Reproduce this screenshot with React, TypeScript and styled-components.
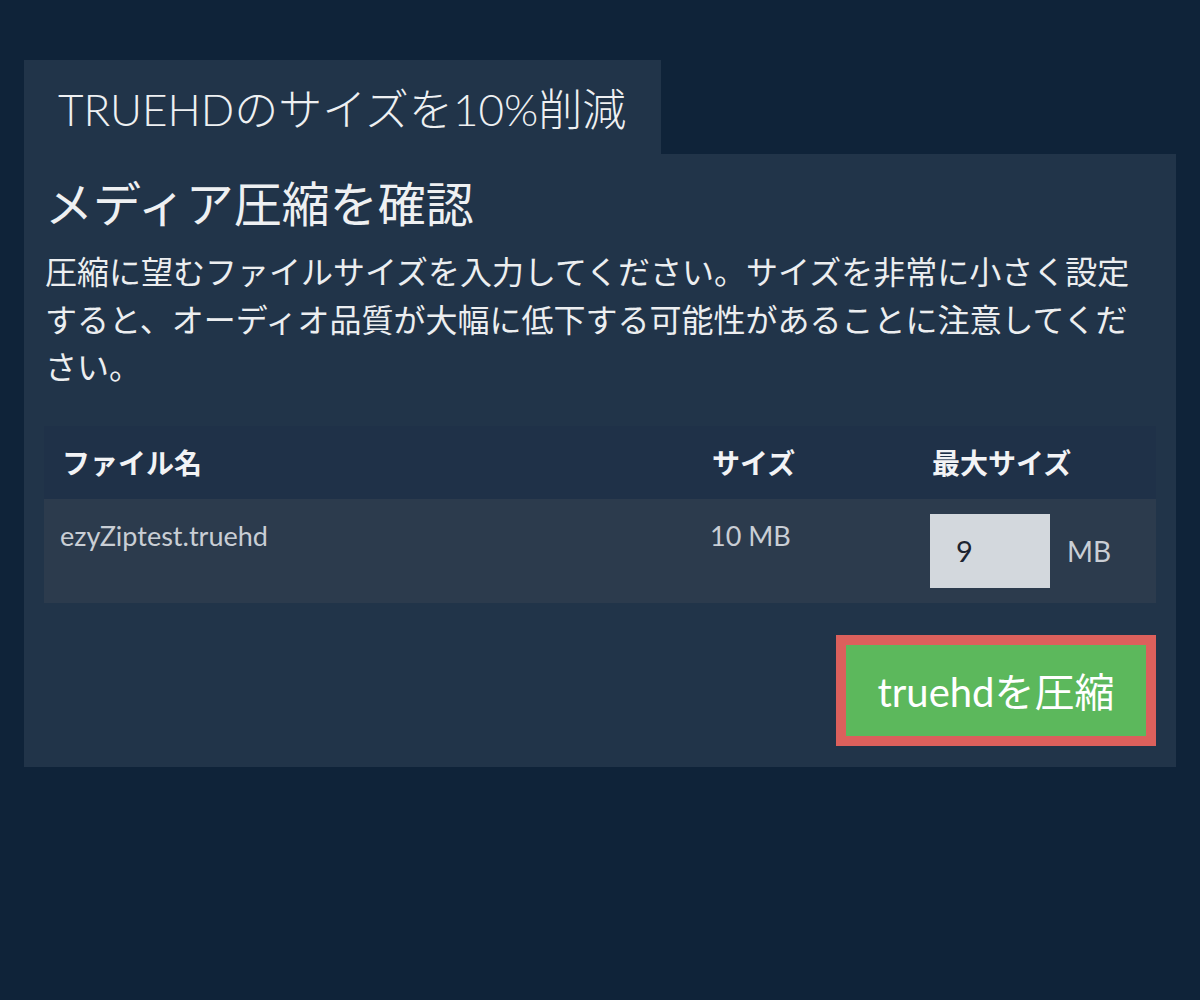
import styled, { createGlobalStyle } from 'styled-components';
import { useState } from 'react';

const GlobalStyle = createGlobalStyle`
  html, body {
    margin: 0;
    padding: 0;
    background: #0f2339;
  }
  body {
    font-family: Lato, 'Noto Sans CJK JP', sans-serif;
    color: #f0f0f0;
  }
`;

const Page = styled.div`
  width: 1200px;
  height: 1000px;
  padding: 60px 24px 0;
  box-sizing: border-box;
`;

const Tab = styled.div`
  width: 637px;
  height: 94px;
  box-sizing: border-box;
  padding-left: 34px;
  display: flex;
  align-items: center;
  background: #213449;
  font-size: 44px;
  font-weight: 300;
  color: #eef0f2;
  white-space: nowrap;
`;

const Panel = styled.div`
  background: #213449;
  padding: 18px 20px 21px;
  display: flex;
  flex-direction: column;
`;

const Heading = styled.h2`
  margin: 0;
  padding-left: 1px;
  font-size: 48px;
  font-weight: 400;
  line-height: 64px;
  color: #eef0f2;
`;

const Description = styled.p`
  margin: 12px 0 0;
  padding-left: 1px;
  font-size: 32px;
  line-height: 47.5px;
  color: #eceef0;
`;

const Table = styled.div`
  margin-top: 35px;
  display: grid;
  grid-template-columns: 650px 220px 1fr;
`;

const HeadCell = styled.div`
  height: 73px;
  display: flex;
  align-items: center;
  padding-left: 18px;
  background: #1f3148;
  font-size: 28px;
  font-weight: 700;
  color: #f2f3f5;
`;

const Cell = styled.div<{ $center?: boolean }>`
  height: 104px;
  box-sizing: border-box;
  padding: 15px 0 15px 16px;
  background: #2c3b4d;
  font-size: 27px;
  line-height: 44px;
  color: #c9ced5;
  display: flex;
  align-items: ${(p) => (p.$center ? 'center' : 'flex-start')};
  gap: 17px;
`;

const SizeInput = styled.input`
  width: 120px;
  height: 74px;
  box-sizing: border-box;
  border: none;
  outline: none;
  padding: 0 0 0 26px;
  background: #d3d8dd;
  font-family: Lato, 'Noto Sans CJK JP', sans-serif;
  font-size: 29px;
  color: #1c2430;
`;

const Unit = styled.span`
  font-size: 28px;
  color: #c9ced5;
`;

const Actions = styled.div`
  margin-top: 32px;
  display: flex;
  justify-content: flex-end;
`;

const CompressButton = styled.button`
  width: 320px;
  height: 111px;
  box-sizing: border-box;
  border: 10px solid #dc605c;
  background: #5cb85c;
  color: #ffffff;
  font-family: Lato, 'Noto Sans CJK JP', sans-serif;
  font-size: 40px;
  font-weight: 400;
  cursor: pointer;
  padding: 0;
`;

const App = () => {
  const [maxSize, setMaxSize] = useState('9');

  return (
    <>
      <GlobalStyle />
      <Page>
        <Tab>TRUEHDのサイズを10%削減</Tab>
        <Panel>
          <Heading>メディア圧縮を確認</Heading>
          <Description>
            圧縮に望むファイルサイズを入力してください。サイズを非常に小さく設定すると、オーディオ品質が大幅に低下する可能性があることに注意してください。
          </Description>
          <Table>
            <HeadCell>ファイル名</HeadCell>
            <HeadCell>サイズ</HeadCell>
            <HeadCell>最大サイズ</HeadCell>
            <Cell>ezyZiptest.truehd</Cell>
            <Cell>10 MB</Cell>
            <Cell $center>
              <SizeInput value={maxSize} onChange={(e) => setMaxSize(e.target.value)} />
              <Unit>MB</Unit>
            </Cell>
          </Table>
          <Actions>
            <CompressButton>truehdを圧縮</CompressButton>
          </Actions>
        </Panel>
      </Page>
    </>
  );
};

export default App;
